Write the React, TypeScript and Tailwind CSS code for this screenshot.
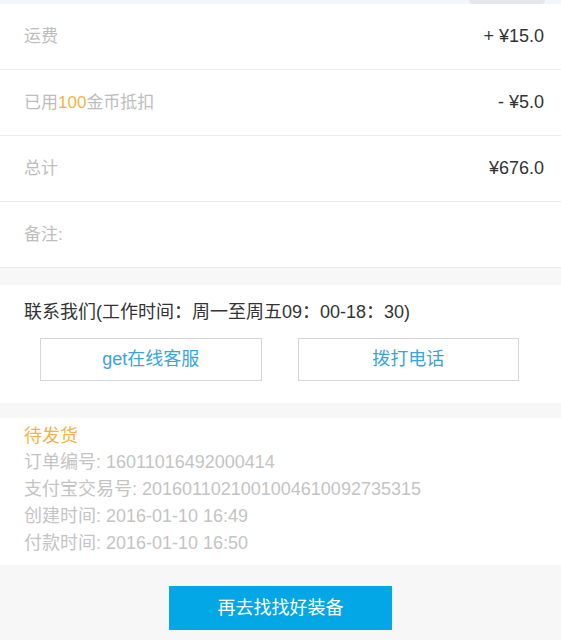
import React from 'react';

const font = { fontFamily: '"Liberation Sans", "Noto Sans CJK SC", sans-serif' };

const rows: { label: React.ReactNode; value?: string }[] = [
  { label: '运费', value: '+ ¥15.0' },
  {
    label: (
      <>
        已用<span className="text-[#f2b44a]">100</span>金币抵扣
      </>
    ),
    value: '- ¥5.0',
  },
  { label: '总计', value: '¥676.0' },
  { label: '备注:' },
];

const info = [
  '订单编号: 16011016492000414',
  '支付宝交易号: 2016011021001004610092735315',
  '创建时间: 2016-01-10 16:49',
  '付款时间: 2016-01-10 16:50',
];

export default function App() {
  return (
    <div className="w-[561px] h-[640px] overflow-hidden bg-white" style={font}>
      {/* top strip from the previous block */}
      <div className="h-[4px] bg-[#f2f7fc] flex justify-end pr-[16px]">
        <div className="w-[76px] h-[4px] rounded-b-full bg-[#e3e6ea]" />
      </div>

      {/* price rows */}
      {rows.map((r, i) => (
        <div
          key={i}
          className="h-[66px] border-b border-[#ececec] flex items-center justify-between pl-[24px] pr-[17px] text-[17px]"
        >
          <span className="text-[#bdbdbd]">{r.label}</span>
          {r.value && <span className="text-[18px] text-[#333333]">{r.value}</span>}
        </div>
      ))}

      <div className="h-[17px] bg-[#f7f7f7]" />

      {/* contact */}
      <div className="pt-[15px] pb-[22px]">
        <p className="pl-[24px] text-[18px] leading-[24px] text-[#333333]">
          联系我们(工作时间：周一至周五09：00-18：30)
        </p>
        <div className="grid grid-cols-2 gap-[36px] pl-[40px] pr-[42px] mt-[14px]">
          <button className="h-[43px] border border-[#d6d6d6] bg-white text-[18px] text-[#3ba3da]">
            get在线客服
          </button>
          <button className="h-[43px] border border-[#d6d6d6] bg-white text-[18px] text-[#3ba3da]">
            拨打电话
          </button>
        </div>
      </div>

      <div className="h-[15px] bg-[#f7f7f7]" />

      {/* order status */}
      <div className="pl-[24px] pt-[5px] pb-[8px]">
        <p className="text-[18px] leading-[26px] text-[#f2b44a]">待发货</p>
        {info.map((t) => (
          <p key={t} className="text-[18px] leading-[27px] text-[#c4c4c4]">
            {t}
          </p>
        ))}
      </div>

      {/* footer */}
      <div className="h-[80px] bg-[#f7f7f7] flex justify-center pt-[21px]">
        <button className="w-[223px] h-[44px] bg-[#04a7e6] text-white text-[18px]">
          再去找找好装备
        </button>
      </div>
    </div>
  );
}
